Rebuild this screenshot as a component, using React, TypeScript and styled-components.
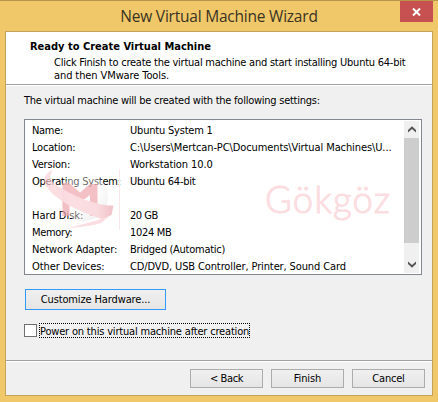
import React from 'react';
import styled, { createGlobalStyle } from 'styled-components';

const GlobalStyle = createGlobalStyle`
  * { box-sizing: border-box; }
  body { margin: 0; overflow: hidden; }
`;

const Window = styled.div`
  width: 438px;
  height: 402px;
  padding: 0 5px 6px;
  display: flex;
  flex-direction: column;
  background: #f0c869;
  border-top: 1px solid #b8974c;
  font: 11px/13px 'DejaVu Sans Condensed', 'DejaVu Sans', sans-serif;
  font-stretch: condensed;
  color: #000;
`;

const TitleBar = styled.header`
  height: 30px;
  flex: none;
  display: grid;
  grid-template-columns: 33px 1fr 33px;
  align-items: start;
`;

const Title = styled.h1`
  grid-column: 2;
  margin: 0;
  padding: 4px 0 0 0;
  text-align: center;
  font: 400 15.5px/23px 'Open Sans', 'Noto Sans', sans-serif;
  letter-spacing: -0.22px;
  white-space: nowrap;
  color: #3a3323;
`;

const CloseButton = styled.button`
  height: 21px;
  padding: 0;
  border: 0;
  display: flex;
  align-items: center;
  justify-content: center;
  background: #c75050;
`;

const Frame = styled.main`
  flex: 1;
  display: flex;
  flex-direction: column;
  border: 1px solid #c2a357;
  background: #f0f0f0;
`;

const Line = styled.span<{ $spacing?: number }>`
  display: block;
  white-space: nowrap;
  letter-spacing: ${(p) => p.$spacing ?? 0}px;
`;

const Header = styled.section`
  height: 53px;
  flex: none;
  padding: 8px 0 0 48px;
  background: #fff;
  border-bottom: 1px solid #a0a0a0;
  box-shadow: 0 1px 0 #fff;
`;

const Heading = styled.h2`
  margin: 0 0 3px -24px;
  font-size: 11px;
  line-height: 13px;
  font-weight: 700;
`;

const Body = styled.section`
  flex: 1;
  padding: 9px 10px 0 18px;
  display: flex;
  flex-direction: column;
  align-items: flex-start;
`;

const Settings = styled.div`
  position: relative;
  width: 398px;
  height: 156px;
  margin: 12px 0 14px;
  border: 1px solid #828790;
  background: #fff;
  display: flex;
  justify-content: space-between;
  padding: 1px 2px 1px 7px;
`;

const List = styled.dl`
  margin: 1px 0 0;
  display: grid;
  grid-template-columns: 98px 1fr;
  grid-auto-rows: 17px;
  line-height: 17px;
`;

const Term = styled.dt`
  white-space: nowrap;
`;

const Detail = styled.dd`
  margin: 0;
  white-space: nowrap;
`;

const ScrollBar = styled.div`
  width: 15px;
  display: flex;
  flex-direction: column;
  justify-content: space-between;
  background: #f0f0f0;
`;

const ScrollArrow = styled.div`
  height: 17px;
  display: flex;
  align-items: center;
  justify-content: center;
`;

const Thumb = styled.div`
  height: 105px;
  margin-bottom: auto;
  background: #cdcdcd;
`;

const Watermark = styled.svg`
  position: absolute;
  left: 15px;
  top: 42px;
  pointer-events: none;
`;

const Button = styled.button<{ $width: number }>`
  width: ${(p) => p.$width}px;
  height: 19px;
  padding: 0;
  border: 1px solid #acacac;
  display: flex;
  align-items: center;
  justify-content: center;
  font: inherit;
  color: inherit;
  background: linear-gradient(#f0f0f0, #e5e5e5);
`;

const DefaultButton = styled(Button)`
  height: 21px;
  margin-left: 1px;
  border-color: #3399ff;
`;

const CheckRow = styled.label`
  margin-top: 13px;
  display: flex;
  align-items: center;
  gap: 2px;
`;

const Box = styled.span`
  width: 13px;
  height: 13px;
  border: 1px solid #707070;
  background: #fff;
`;

const FocusLabel = styled.span`
  width: 211px;
  height: 15px;
  line-height: 15px;
  border: 1px dotted #000;
`;

const Footer = styled.footer`
  height: 35px;
  flex: none;
  padding: 8px 7px 0 0;
  display: flex;
  justify-content: flex-end;
  gap: 8px;
  border-top: 1px solid #a0a0a0;
  box-shadow: inset 0 1px 0 #fff;
`;

type Row = { label: string; value: string; ls?: number; vs?: number };

const rows: Row[] = [
  { label: 'Name:', value: 'Ubuntu System 1', ls: -0.3, vs: -0.2 },
  {
    label: 'Location:',
    value: 'C:\\Users\\Mertcan-PC\\Documents\\Virtual Machines\\U...',
    ls: -0.2,
    vs: -0.1,
  },
  { label: 'Version:', value: 'Workstation 10.0', ls: -0.2, vs: -0.1 },
  { label: 'Operating System:', value: 'Ubuntu 64-bit', ls: -0.24, vs: -0.23 },
  { label: '', value: '' },
  { label: 'Hard Disk:', value: '20 GB', vs: -0.5 },
  { label: 'Memory:', value: '1024 MB', ls: -0.35, vs: -0.3 },
  { label: 'Network Adapter:', value: 'Bridged (Automatic)', ls: -0.1, vs: -0.27 },
  {
    label: 'Other Devices:',
    value: 'CD/DVD, USB Controller, Printer, Sound Card',
    ls: -0.07,
    vs: -0.12,
  },
];

const Chevron = ({ down }: { down?: boolean }) => (
  <svg width="8" height="7" viewBox="0 0 8 7">
    <path
      d={down ? 'M0 0.5L4 4L8 0.5V3L4 6.8L0 3Z' : 'M0 6.5L4 3L8 6.5V4L4 0.2L0 4Z'}
      fill="#555"
    />
  </svg>
);

const Logo = () => (
  <Watermark width="365" height="75" viewBox="40 162 365 75">
    <defs>
      <radialGradient id="ball" cx="0.4" cy="0.35" r="0.7">
        <stop offset="0.5" stopColor="#fff" stopOpacity="0.4" />
        <stop offset="1" stopColor="#e2e2e2" stopOpacity="0.5" />
      </radialGradient>
      <linearGradient id="ribbon" x1="0" x2="1">
        <stop offset="0" stopColor="#f9ccd2" stopOpacity="0.6" />
        <stop offset="0.3" stopColor="#fbdde2" stopOpacity="0.97" />
        <stop offset="0.75" stopColor="#fadce0" />
        <stop offset="1" stopColor="#f0c2c8" />
      </linearGradient>
    </defs>
    <circle cx="84" cy="197" r="24" fill="url(#ball)" />
    <path
      d="M62.5 183H69L80 192.5L90 184H97.5V216H90V195L80 202.5L69.500 193V216H62.5Z"
      fill="#eda4aa"
      opacity="0.68"
    />
    <path
      d="M112 214C97 222 80 224 66 229C78 226.5 90 227 101 223Z"
      fill="#f9d8dd"
      opacity="0.85"
    />
    <path
      d="M53.5 169.5C42 174 43 183 48 189C59 202 82 213 102 219L111.5 215L113.5 205.5C94 206 70 194 57 185.5C50 181 48 176 53.500 169.5Z"
      fill="url(#ribbon)"
    />
    <path d="M119.5 169V230" stroke="#fbe6e9" />
    <text
      x="265"
      y="213"
      textLength="125"
      fontFamily="Lato, 'Noto Sans', sans-serif"
      fontSize="36.5"
      fontWeight="300"
      fill="#fbdde1"
      stroke="#fbdde1"
      strokeWidth="1"
    >
      Gökgöz
    </text>
  </Watermark>
);

export default function App() {
  return (
    <>
      <GlobalStyle />
      <Window>
        <TitleBar>
          <Title>New Virtual Machine Wizard</Title>
          <CloseButton aria-label="Close">
            <svg width="9" height="8" viewBox="0 0 9 8">
              <path d="M1 0.5L8 7.5M8 0.5L1 7.5" stroke="#fff" strokeWidth="2" />
            </svg>
          </CloseButton>
        </TitleBar>
        <Frame>
          <Header>
            <Heading>
              <Line>Ready to Create Virtual Machine</Line>
            </Heading>
            <Line $spacing={-0.24}>
              Click Finish to create the virtual machine and start installing Ubuntu 64-bit
            </Line>
            <Line $spacing={-0.1}>and then VMware Tools.</Line>
          </Header>
          <Body>
            <Line $spacing={-0.25}>
              The virtual machine will be created with the following settings:
            </Line>
            <Settings>
              <List>
                {rows.map((row, i) => (
                  <React.Fragment key={i}>
                    <Term>
                      <Line $spacing={row.ls}>{row.label}</Line>
                    </Term>
                    <Detail>
                      <Line $spacing={row.vs}>{row.value}</Line>
                    </Detail>
                  </React.Fragment>
                ))}
              </List>
              <ScrollBar>
                <ScrollArrow>
                  <Chevron />
                </ScrollArrow>
                <Thumb />
                <ScrollArrow>
                  <Chevron down />
                </ScrollArrow>
              </ScrollBar>
              <Logo />
            </Settings>
            <DefaultButton $width={141}>
              <Line $spacing={-0.13}>Customize Hardware...</Line>
            </DefaultButton>
            <CheckRow>
              <Box />
              <FocusLabel>
                <Line $spacing={-0.18}>Power on this virtual machine after creation</Line>
              </FocusLabel>
            </CheckRow>
          </Body>
          <Footer>
            <Button $width={73}>
              <Line $spacing={-0.4}>&lt; Back</Line>
            </Button>
            <Button $width={73}>
              <Line $spacing={-0.1}>Finish</Line>
            </Button>
            <Button $width={73}>
              <Line $spacing={-0.2}>Cancel</Line>
            </Button>
          </Footer>
        </Frame>
      </Window>
    </>
  );
}
